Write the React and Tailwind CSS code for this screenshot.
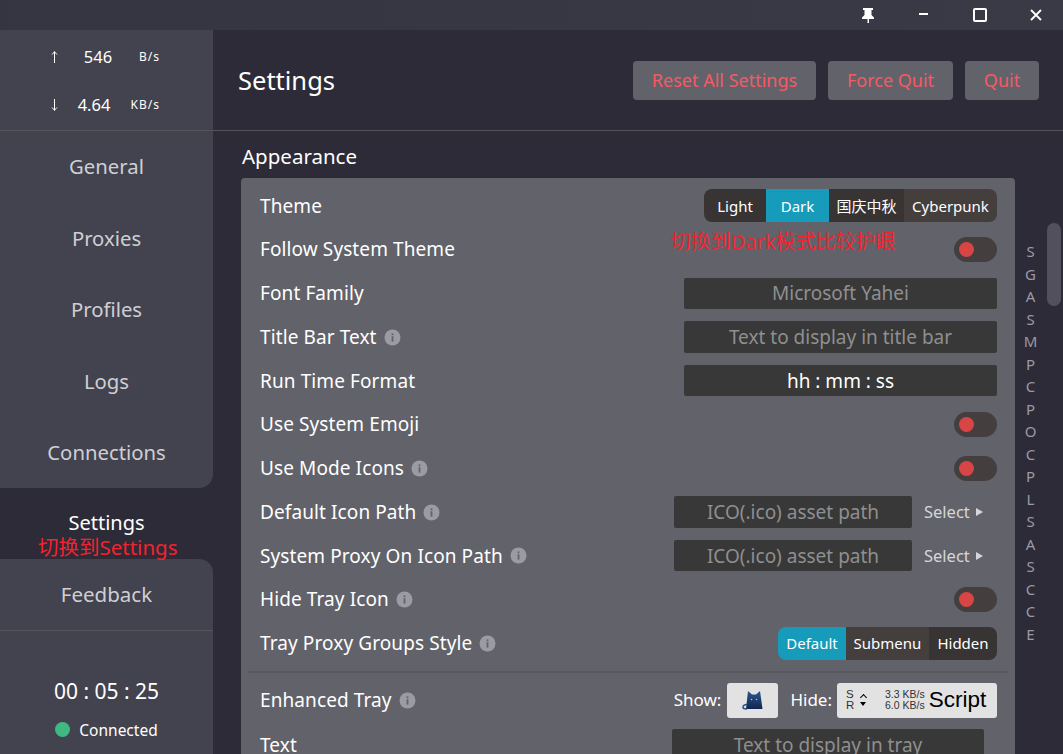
const sans = { fontFamily: '"Noto Sans", "Noto Sans CJK SC", sans-serif' }

const navTop = ['General', 'Proxies', 'Profiles', 'Logs', 'Connections']
const letters = ['S', 'G', 'A', 'S', 'M', 'P', 'C', 'P', 'O', 'C', 'P', 'L', 'S', 'A', 'S', 'C', 'C', 'E']

function Info() {
  return (
    <svg width="17" height="17" viewBox="0 0 17 17" className="shrink-0">
      <circle cx="8.5" cy="8.5" r="8" fill="#9a9ba3" />
      <rect x="7.6" y="7.2" width="1.8" height="5.4" fill="#62626b" />
      <rect x="7.6" y="4.4" width="1.8" height="1.8" fill="#62626b" />
    </svg>
  )
}

function Arrow({ down }) {
  return (
    <svg width="7" height="12" viewBox="0 0 7 12" fill="none" stroke="white" className={down ? 'rotate-180' : ''}>
      <path d="M3.5 0.500V12M1 3.500L3.500 0.800L6 3.500" />
    </svg>
  )
}

function Toggle() {
  return (
    <div className="w-[43px] h-[25px] rounded-full bg-[#443e3e] flex items-center pl-[5px]">
      <div className="w-[15px] h-[15px] rounded-full bg-[#d94545]" />
    </div>
  )
}

function Field({ text, width = 'w-[313px]', height = 'h-[31px]', bright = false }) {
  return (
    <div className={`${width} ${height} rounded-[2px] bg-[#383838] flex items-center justify-center text-[19px] ${bright ? 'text-white' : 'text-[#8f8f8f]'}`}>
      {text}
    </div>
  )
}

function Segments({ items }) {
  return (
    <div className="flex rounded-[8px] overflow-hidden text-[15px] text-white">
      {items.map(it => (
        <div key={it.label} className={`${it.w} h-[33px] flex items-center justify-center ${it.bg}`}>{it.label}</div>
      ))}
    </div>
  )
}

function Select() {
  return (
    <div className="w-[85px] pl-[12px] flex items-center gap-[6px] text-[16.5px] text-[#d6d6d9]">
      Select
      <span className="w-0 h-0 border-y-[4.5px] border-y-transparent border-l-[7px] border-l-[#d6d6d9]" />
    </div>
  )
}

function Row({ label, info, children }) {
  return (
    <div className="h-[43.75px] flex items-center justify-between pl-[19px] pr-[18px]">
      <div className="flex items-center gap-[7px] text-[19px] tracking-[0.1px] text-white">
        {label}
        {info && <Info />}
      </div>
      <div className="flex items-center">{children}</div>
    </div>
  )
}

function Cat() {
  return (
    <svg width="24" height="22" viewBox="0 0 24 22">
      <defs>
        <linearGradient id="cat" x1="0" y1="0" x2="0" y2="1">
          <stop offset="0" stopColor="#2a5690" />
          <stop offset="1" stopColor="#12264f" />
        </linearGradient>
      </defs>
      <path d="M7 2l4 3.500h4L19 2l2.500 18H5z" fill="url(#cat)" />
      <path d="M6 15.500c-2.500 0-4 1.500-4 3s1.500 1.500 4 1.500" fill="none" stroke="#27508a" strokeWidth="1.500" />
      <circle cx="10.500" cy="10.500" r=".8" fill="#9fc0ea" />
      <circle cx="15.500" cy="10.500" r=".8" fill="#9fc0ea" />
    </svg>
  )
}

function TrayPreview() {
  return (
    <div className="w-[160px] h-[35px] rounded-[3px] bg-[#e2e2e2] text-black flex items-center pl-[9px]" style={{ fontFamily: '"Liberation Sans", sans-serif' }}>
      <div className="text-[11.5px] leading-[11px] w-[14px] text-[#333333]">S<br />R</div>
      <div className="w-[25px] flex flex-col gap-[2px]">
        <span className="w-[5px] h-[5px] border-l border-t border-black rotate-45 ml-[1px]" />
        <span className="w-0 h-0 border-x-[3.500px] border-x-transparent border-t-[4px] border-t-black" />
      </div>
      <div className="text-[10.500px] leading-[11px] whitespace-nowrap text-[#333333]">3.3 KB/s<br />6.0 KB/s</div>
      <div className="text-[22.500px] ml-[4px]">Script</div>
    </div>
  )
}

export default function App() {
  return (
    <div className="h-screen w-full overflow-hidden flex flex-col bg-[#2d2b38] relative" style={sans}>
      {/* title bar */}
      <div className="h-[30px] shrink-0 flex items-center justify-end bg-gradient-to-r from-[#353541] to-[#3a3a46] text-white">
        <div className="w-[57px] flex justify-center">
          <svg width="14" height="15" viewBox="0 0 14 15" fill="white">
            <path d="M2 0h10v2H10.500v5L13 9.500V11H8v4H6.500V11H1V9.500L3.500 7V2H2z" />
          </svg>
        </div>
        <div className="w-[55px] flex justify-center pb-[2px]">
          <div className="w-[9px] h-[2px] bg-white" />
        </div>
        <div className="w-[58px] flex justify-center">
          <div className="w-[14px] h-[14px] rounded-[2px] border-2 border-white" />
        </div>
        <div className="w-[54px] flex justify-center">
          <svg width="12" height="12" viewBox="0 0 12 12" stroke="white" strokeWidth="1.800">
            <path d="M1 1l10 10M11 1L1 11" />
          </svg>
        </div>
      </div>

      <div className="flex-1 flex min-h-0">
        {/* sidebar */}
        <aside className="w-[213px] shrink-0 flex flex-col">
          <div className="h-[101px] shrink-0 bg-[#43434f] border-b border-[#57535a] text-white flex flex-col justify-center gap-[22px] pt-[2px]">
            <div className="h-[26px] flex items-center">
              <span className="ml-[44px] w-[20px] flex justify-center"><Arrow /></span>
              <span className="w-[68px] text-center text-[16.5px]">546</span>
              <span className="w-[28px] text-[12px] tracking-[1px] whitespace-nowrap flex justify-end">B/s</span>
            </div>
            <div className="h-[26px] flex items-center">
              <span className="ml-[44px] w-[20px] flex justify-center"><Arrow down /></span>
              <span className="w-[68px] text-center text-[16.5px] pr-[8px]">4.64</span>
              <span className="w-[28px] text-[12px] tracking-[1px] whitespace-nowrap flex justify-end">KB/s</span>
            </div>
          </div>
          <nav className="flex flex-col">
            <div className="bg-[#43434f] rounded-br-[14px]">
              {navTop.map(n => (
                <div key={n} className="h-[71.400px] flex items-center justify-center text-[20.300px] text-[#cfcfd2]">{n}</div>
              ))}
            </div>
            <div className="h-[71px] flex items-start justify-center text-[20px] text-white relative pt-[22px]">
              <span className="leading-[26px]">Settings</span>
              <span className="absolute left-[38px] top-[46px] text-[20.500px] leading-[26px] text-[#f5222d] whitespace-nowrap">切换到Settings</span>
            </div>
            <div className="h-[72px] bg-[#43434f] rounded-tr-[14px] border-b border-[#57535a] flex items-center justify-center text-[20.500px] text-[#cfcfd2]">Feedback</div>
          </nav>
          <div className="flex-1 bg-[#43434f] flex flex-col items-center pt-[47px] text-white">
            <div className="text-[21px] leading-[26px]">00 : 05 : 25</div>
            <div className="mt-[13px] flex items-center gap-[9px] text-[15.500px] leading-[26px]">
              <span className="w-[15px] h-[15px] rounded-full bg-[#3fb981]" />
              Connected
            </div>
          </div>
        </aside>

        {/* main */}
        <main className="flex-1 min-w-0 flex flex-col">
          <header className="h-[101px] shrink-0 border-b border-[#57535a] flex items-center justify-between pl-[25px] pr-[24px]">
            <h1 className="text-[25.500px] text-white">Settings</h1>
            <div className="flex gap-[12px] text-[18px] text-[#f55a63]">
              <button className="w-[183px] h-[39px] rounded-[4px] bg-[#62626b]">Reset All Settings</button>
              <button className="w-[125px] h-[39px] rounded-[4px] bg-[#62626b]">Force Quit</button>
              <button className="w-[74px] h-[39px] rounded-[4px] bg-[#62626b]">Quit</button>
            </div>
          </header>

          <div className="flex-1 min-h-0 flex overflow-hidden">
            <section className="w-[802px] shrink-0 pl-[28px]">
              <h2 className="text-[20.500px] text-white leading-[26px] pt-[12px] pl-[1px] pb-[9px]">Appearance</h2>
              <div className="bg-[#62626b] rounded-[4px] pt-[6px] pb-[20px]">
                <Row label="Theme">
                  <Segments items={[
                    { label: 'Light', w: 'w-[62px]', bg: 'bg-[#383433]' },
                    { label: 'Dark', w: 'w-[63px]', bg: 'bg-[#169bbb]' },
                    { label: '国庆中秋', w: 'w-[75px]', bg: 'bg-[#383433]' },
                    { label: 'Cyberpunk', w: 'w-[93px]', bg: 'bg-[#443e3d]' },
                  ]} />
                </Row>
                <Row label="Follow System Theme"><Toggle /></Row>
                <Row label="Font Family"><Field text="Microsoft Yahei" /></Row>
                <Row label="Title Bar Text" info><Field text="Text to display in title bar" height="h-[32px]" /></Row>
                <Row label="Run Time Format"><Field text="hh : mm : ss" bright /></Row>
                <Row label="Use System Emoji"><Toggle /></Row>
                <Row label="Use Mode Icons" info><Toggle /></Row>
                <Row label="Default Icon Path" info>
                  <Field text="ICO(.ico) asset path" width="w-[238px]" height="h-[32px]" />
                  <Select />
                </Row>
                <Row label="System Proxy On Icon Path" info>
                  <Field text="ICO(.ico) asset path" width="w-[238px]" />
                  <Select />
                </Row>
                <Row label="Hide Tray Icon" info><Toggle /></Row>
                <Row label="Tray Proxy Groups Style" info>
                  <Segments items={[
                    { label: 'Default', w: 'w-[68px]', bg: 'bg-[#169bbb]' },
                    { label: 'Submenu', w: 'w-[83px]', bg: 'bg-[#443e3d]' },
                    { label: 'Hidden', w: 'w-[68px]', bg: 'bg-[#383433]' },
                  ]} />
                </Row>
                <div className="h-[2px] mx-[6px] mt-[6px] mb-[5px] bg-[#58585f]" />
                <Row label="Enhanced Tray" info>
                  <span className="text-[17px] text-white mr-[6px]">Show:</span>
                  <div className="w-[51px] h-[35px] rounded-[3px] bg-[#e2e2e2] flex items-center justify-center"><Cat /></div>
                  <span className="text-[17px] text-white ml-[12px] mr-[5px]">Hide:</span>
                  <TrayPreview />
                </Row>
                <div className="h-[43.750px] mt-[1px] flex items-center justify-between pl-[19px] pr-[31px]">
                  <div className="text-[19px] tracking-[0.1px] text-white">Text</div>
                  <Field text="Text to display in tray" width="w-[312px]" />
                </div>
              </div>
            </section>

            <div className="w-[32px] shrink-0 flex flex-col items-center pt-[109px] pr-[1px] text-[15px] leading-[22.500px] text-[#9a9aa3]">
              {letters.map((l, i) => <span key={i}>{l}</span>)}
            </div>

            <div className="flex-1 pt-[92px]">
              <div className="w-[14px] h-[83px] rounded-full bg-[#52505f]" />
            </div>
          </div>
        </main>
      </div>

      <span className="absolute left-[671px] top-[229px] text-[20px] leading-[26px] text-[#f5222d] whitespace-nowrap">切换到Dark模式比较护眼</span>
    </div>
  )
}
